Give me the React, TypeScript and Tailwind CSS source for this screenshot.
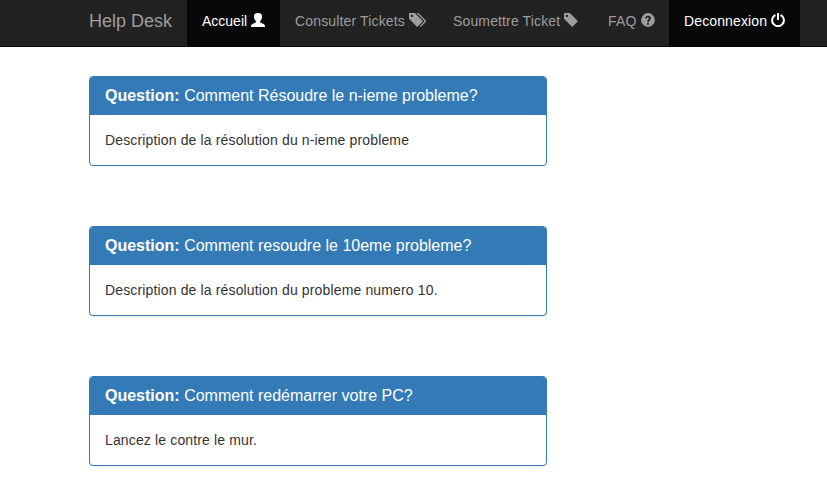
import type { ReactNode } from 'react';

function Glyph({ wide = false, children }: { wide?: boolean; children: ReactNode }) {
  return (
    <svg
      viewBox={wide ? '0 0 1500 1200' : '0 0 1200 1200'}
      className={`mt-0.5 ml-1 h-3.5 shrink-0 ${wide ? 'w-[17.5px]' : 'w-3.5'}`}
      fill="currentColor"
      aria-hidden="true"
    >
      <g transform="matrix(1 0 0 -1 0 1200)">{children}</g>
    </svg>
  );
}

const userIcon = (
  <Glyph>
    <path d="M600 1200C400 1200 250 1120 250 930C250 770 300 610 410 520V430C410 385 375 360 320 335L110 250C40 215 0 150 0 0H1200C1200 150 1160 215 1090 250L880 335C825 360 790 385 790 430V520C900 610 950 770 950 930C950 1120 800 1200 600 1200Z" />
  </Glyph>
);

const tagPath =
  'M1 700v475q0 10 7.5 17.5t17.5 7.5h474l700 -700l-500 -500zM148 953q0 -42 29 -71q30 -30 71.5 -30t71.5 30q29 29 29 71t-29 71q-30 30 -71.5 30t-71.5 -30q-29 -29 -29 -71z';

const tagsIcon = (
  <Glyph wide>
    <path d={tagPath} />
    <path d="M641 1200h160l700 -700l-500 -500l-80 80l420 420z" />
  </Glyph>
);

const tagIcon = (
  <Glyph>
    <path d={tagPath} />
  </Glyph>
);

const questionIcon = (
  <Glyph>
    <path
      fillRule="evenodd"
      d="M600 1190a590 590 0 1 0 0 -1180a590 590 0 1 0 0 1180zM602 975C450 975 355 890 350 725H510C513 795 540 835 595 835C645 835 675 805 675 755C675 640 520 610 520 420H675C675 540 850 590 850 755C850 890 750 975 602 975zM517 350V200H675V350z"
    />
  </Glyph>
);

const powerIcon = (
  <Glyph>
    <path d="M515 1200h170v-600h-170z" />
    <path
      d="M380 1030A505 505 0 1 1 820 1030"
      fill="none"
      stroke="currentColor"
      strokeWidth="170"
    />
  </Glyph>
);

const links = [
  { label: 'Accueil', icon: userIcon, active: true, layout: 'w-[93px]' },
  { label: 'Consulter Tickets', icon: tagsIcon, active: false, layout: 'w-[158px] tracking-[0.15px]' },
  { label: 'Soumettre Ticket', icon: tagIcon, active: false, layout: 'w-[155px] tracking-[0.14px]' },
  { label: 'FAQ', icon: questionIcon, active: false, layout: 'w-[76px] tracking-[0.25px]' },
  { label: 'Deconnexion', icon: powerIcon, active: true, layout: 'w-[131px] tracking-[0.13px]' },
];

const questions = [
  {
    title: 'Comment Résoudre le n-ieme probleme?',
    body: 'Description de la résolution du n-ieme probleme',
  },
  {
    title: 'Comment resoudre le 10eme probleme?',
    body: 'Description de la résolution du probleme numero 10.',
  },
  { title: 'Comment redémarrer votre PC?', body: 'Lancez le contre le mur.' },
];

export default function App() {
  return (
    <div className="h-[494px] overflow-hidden bg-white font-['Liberation_Sans',Arial,sans-serif] text-sm leading-5 text-[#333]">
      <nav className="flex h-[47px] border-b border-[#080808] bg-[#222] pl-[89px] text-[#9d9d9d]">
        <a className="w-[98px] pt-[11px] text-lg leading-5 whitespace-nowrap">Help Desk</a>
        {links.map((link) => (
          <a
            key={link.label}
            className={`flex h-[46px] shrink-0 items-start px-[15px] pt-[11px] whitespace-nowrap ${link.layout} ${
              link.active ? 'bg-[#080808] text-white' : ''
            }`}
          >
            {link.label}
            {link.icon}
          </a>
        ))}
      </nav>
      <main className="flex flex-col gap-[60px] pt-[29px] pl-[89px]">
        {questions.map((q) => (
          <section
            key={q.title}
            className="h-[90px] w-[458px] shrink-0 rounded border border-[#337ab7] bg-white shadow-[0_1px_1px_rgba(0,0,0,0.05)]"
          >
            <h3 className="h-[38px] rounded-t-[3px] bg-[#337ab7] px-[15px] pt-2.5 text-base leading-[17.6px] text-white">
              <b>Question:</b> {q.title}
            </h3>
            <p className="p-[15px] tracking-[0.145px]">{q.body}</p>
          </section>
        ))}
      </main>
    </div>
  );
}
